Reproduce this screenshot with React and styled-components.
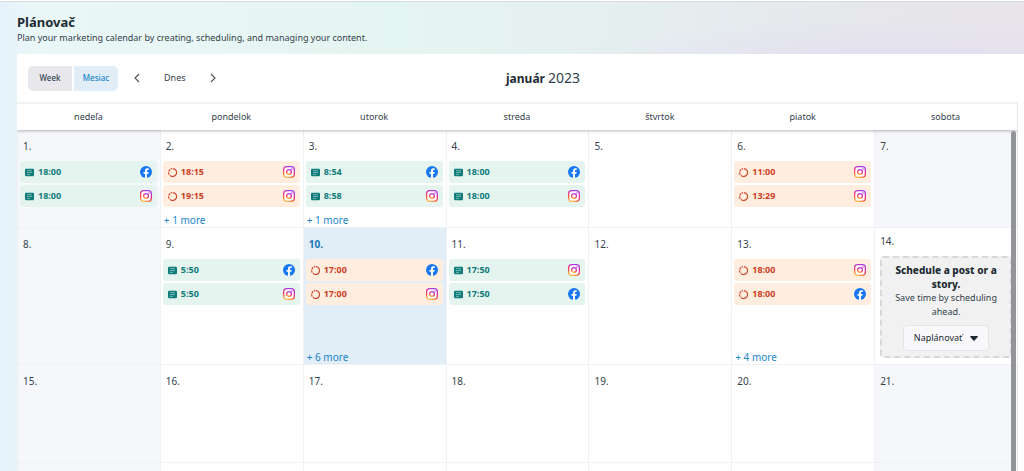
import React from "react";
import styled, { createGlobalStyle } from "styled-components";

const GlobalStyle = createGlobalStyle`
  * {
    box-sizing: border-box;
  }
  body {
    margin: 0;
    font-family: "Noto Sans", "Open Sans", sans-serif;
    font-size: 9px;
    line-height: 14px;
    color: #34424c;
  }
  h1, h2, h3, p, ul {
    margin: 0;
    padding: 0;
  }
  button {
    font: inherit;
    color: inherit;
    border: 0;
    background: none;
    padding: 0;
    cursor: pointer;
  }
`;

const StyledPage = styled.div`
  height: 100vh;
  overflow: hidden;
  display: flex;
  flex-direction: column;
  padding-left: 17px;
  border-top: 1px solid #fff;
  background:
    linear-gradient(90deg, #e6f1fc 0, rgba(230, 241, 252, 0) 30px),
    radial-gradient(ellipse 330px 40px at 900px 60px, #e3dff0, rgba(227, 223, 240, 0)),
    linear-gradient(90deg, #eaf7f8 0, #e5f5f1 400px, #e5edef 680px, #e6e8ec 820px, #e8e4ea 1024px);
  box-shadow: inset 0 1px 0 #d6dcdc;
`;

const StyledHeader = styled.header`
  padding: 12px 0 9px;
`;

const StyledTitle = styled.h1`
  font-size: 13px;
  line-height: 18px;
  font-weight: 700;
  color: #1c2b33;
`;

const StyledCard = styled.main`
  flex: 1;
  min-height: 0;
  display: flex;
  flex-direction: column;
  background: #fff;
  border-top-left-radius: 3px;
`;

const StyledToolbar = styled.div`
  display: grid;
  grid-template-columns: 14fr auto 13fr;
  align-items: center;
  height: 48px;
  flex: none;
  padding-left: 11px;
`;

const StyledTools = styled.div`
  display: flex;
  align-items: center;
  gap: 14px;
`;

const StyledSwitch = styled.div`
  display: flex;
  gap: 2px;
  border-radius: 5px;
  overflow: hidden;
`;

const StyledSwitchButton = styled.button`
  width: 44px;
  height: 25px;
  font-size: 8px;
  font-weight: 500;
  background: ${({ $active }) => ($active ? "#e1edf7" : "#e8e8ec")};
  color: ${({ $active }) => ($active ? "#1c86c8" : "#34424c")};
`;

const StyledToolButton = styled.button`
  display: flex;
  align-items: center;
  justify-content: center;
  min-width: 10px;
  margin: ${({ $wide }) => ($wide ? "0 8px" : "0")};
`;

const StyledMonth = styled.h2`
  font-size: 12px;
  line-height: 18px;
  font-weight: 700;
  color: #1c2b33;
  span {
    font-size: 14px;
    font-weight: 400;
    color: #34424c;
  }
`;

const StyledCalendar = styled.section`
  position: relative;
  flex: 1;
  min-height: 0;
  overflow: hidden;
  margin-right: 7px;
  box-shadow: 1px 0 0 #e6e8ee;
`;

const StyledWeekdays = styled.div`
  position: relative;
  display: grid;
  grid-template-columns: repeat(7, 1fr);
  align-items: center;
  height: 28px;
  border-top: 2px solid #f2f3f5;
  text-align: center;
  background: #fff;
  box-shadow: 0 1px 3px rgba(0, 0, 0, 0.28);
`;

const StyledWeeks = styled.div`
  display: grid;
  grid-template-columns: repeat(7, 1fr);
  grid-auto-rows: minmax(98px, auto);
`;

const cellColors = {
  plain: "#fff",
  weekend: "#f6f7fa",
  today: "#e1edf7",
};

const StyledDay = styled.div`
  display: flex;
  flex-direction: column;
  min-width: 0;
  padding: ${({ $promo }) => ($promo ? "6px 5px" : "9px 3px 0 2px")};
  border-left: 1px solid #eff1f4;
  border-bottom: 1px solid #eff1f4;
  background: ${({ $kind }) => cellColors[$kind]};
`;

const StyledDate = styled.div`
  font-size: 10px;
  padding-left: ${({ $promo }) => ($promo ? "0" : "3px")};
  margin-bottom: 8px;
  font-weight: ${({ $today }) => ($today ? 700 : 400)};
  color: ${({ $today }) => ($today ? "#1878b4" : "inherit")};
`;

const StyledPosts = styled.ul`
  list-style: none;
  display: flex;
  flex-direction: column;
  gap: 2px;
`;

const StyledPost = styled.li`
  display: flex;
  align-items: center;
  gap: 4px;
  height: 22px;
  padding: 0 5px;
  border-radius: 3px;
  font-weight: 700;
  color: ${({ $draft }) => ($draft ? "#cf4023" : "#0f7c7c")};
  background: ${({ $draft }) => ($draft ? "#ffede0" : "#e6f4ef")};
  svg:last-child {
    margin-left: auto;
  }
`;

const StyledMore = styled.a`
  margin-top: auto;
  padding-left: 1px;
  font-size: 10px;
  color: #1c86c8;
  text-decoration: none;
`;

const StyledPromo = styled.div`
  display: flex;
  flex-direction: column;
  align-items: center;
  padding: 5px 6px;
  border: 2px dashed #d6d8da;
  border-radius: 3px;
  background: #f1f1f1;
  text-align: center;
  h3 {
    font-size: 10px;
    line-height: 14px;
    font-weight: 800;
    color: #1c2b33;
  }
`;

const StyledPromoButton = styled.button`
  display: flex;
  align-items: center;
  gap: 8px;
  height: 26px;
  margin-top: 6px;
  padding: 0 10px;
  border: 1px solid #e4e6ea;
  border-radius: 4px;
  background: #f8f8fa;
  color: #1c2b33;
`;

const StyledScrollThumb = styled.div`
  position: absolute;
  top: 29px;
  right: 1px;
  bottom: -8px;
  width: 5px;
  border-radius: 3px;
  background: #929497;
`;

function FacebookIcon() {
  return (
    <svg width="12" height="12" viewBox="0 0 24 24">
      <circle cx="12" cy="12" r="12" fill="#1877f2" />
      <path
        fill="#fff"
        d="M10.1 23.9v-8.4H7v-3.5h3.1V9.4c0-3.1 1.8-4.8 4.6-4.8 1.4 0 2.7.2 2.7.2v3h-1.5c-1.5 0-2 .9-2 1.9V12h3.4l-.6 3.5h-2.8v8.4z"
      />
    </svg>
  );
}

function InstagramIcon() {
  return (
    <svg width="12" height="12" viewBox="0 0 24 24" fill="none">
      <defs>
        <linearGradient id="instagram" x1="0.2" y1="1" x2="0.6" y2="0">
          <stop offset="0" stopColor="#fdc04a" />
          <stop offset="0.3" stopColor="#fb5a3c" />
          <stop offset="0.6" stopColor="#e6308c" />
          <stop offset="1" stopColor="#a83be8" />
        </linearGradient>
      </defs>
      <rect x="1.3" y="1.3" width="21.4" height="21.4" rx="6" fill="#fff" stroke="url(#instagram)" strokeWidth="2.6" />
      <circle cx="12" cy="12" r="4.8" stroke="url(#instagram)" strokeWidth="2.6" />
      <circle cx="18" cy="6" r="1.5" fill="#c336c8" />
    </svg>
  );
}

function PostIcon() {
  return (
    <svg width="9" height="9" viewBox="0 0 18 18">
      <rect x="0" y="1.5" width="18" height="15" rx="2.5" fill="#0f7c7c" />
      <path d="M4 5.2h10M4 9h10M4 12.8h6" stroke="#b5dad6" strokeWidth="1.2" />
    </svg>
  );
}

function DraftIcon() {
  return (
    <svg width="9" height="9" viewBox="0 0 18 18" fill="none" stroke="#cf4023" strokeWidth="2.2">
      <path d="M10 1.3a7.8 7.8 0 1 1-6.2 13.3" />
      <path d="M2.6 13.4a7.8 7.8 0 0 1-1.3-4.8M1.6 7a7.8 7.8 0 0 1 2.6-3.9M5.4 2.2a7.8 7.8 0 0 1 2.8-.9" />
    </svg>
  );
}

function Chevron({ flip }) {
  return (
    <svg width="6" height="10" viewBox="0 0 6 10" fill="none" stroke="#4a5258" strokeWidth="1.1">
      <path d={flip ? "M1 1l4 4-4 4" : "M5 1L1 5l4 4"} />
    </svg>
  );
}

const icons = { fb: FacebookIcon, ig: InstagramIcon };

const weekdays = ["nedeľa", "pondelok", "utorok", "streda", "štvrtok", "piatok", "sobota"];

const days = [
  { posts: [["18:00", "fb"], ["18:00", "ig"]] },
  { draft: true, posts: [["18:15", "ig"], ["19:15", "ig"]], more: 1 },
  { posts: [["8:54", "fb"], ["8:58", "ig"]], more: 1 },
  { posts: [["18:00", "fb"], ["18:00", "ig"]] },
  {},
  { draft: true, posts: [["11:00", "ig"], ["13:29", "ig"]] },
  {},
  {},
  { posts: [["5:50", "fb"], ["5:50", "ig"]] },
  { draft: true, posts: [["17:00", "fb"], ["17:00", "ig"]], more: 6, today: true },
  { posts: [["17:50", "ig"], ["17:50", "fb"]] },
  {},
  { draft: true, posts: [["18:00", "ig"], ["18:00", "fb"]], more: 4 },
  { promo: true },
  ...Array.from({ length: 14 }, () => ({})),
];

function getKind(index, day) {
  if (day.today) return "today";
  if (day.promo) return "plain";
  return index % 7 === 0 || index % 7 === 6 ? "weekend" : "plain";
}

function Promo() {
  return (
    <StyledPromo>
      <h3>Schedule a post or a story.</h3>
      <p>Save time by scheduling ahead.</p>
      <StyledPromoButton>
        Naplánovať
        <svg width="8" height="5" viewBox="0 0 8 5">
          <path d="M.6 0h6.8q.8.3.3.9L4.6 4.5q-.6.6-1.2 0L.3.9Q-.2.3.6 0z" fill="#1c2b33" />
        </svg>
      </StyledPromoButton>
    </StyledPromo>
  );
}

function Day({ number, kind, day }) {
  const { posts = [], more, draft, today, promo } = day;

  return (
    <StyledDay $kind={kind} $promo={promo}>
      <StyledDate $today={today} $promo={promo}>{number}.</StyledDate>
      {promo && <Promo />}
      {posts.length > 0 && (
        <StyledPosts>
          {posts.map(([time, network], i) => {
            const NetworkIcon = icons[network];
            return (
              <StyledPost key={i} $draft={draft}>
                {draft ? <DraftIcon /> : <PostIcon />}
                <span>{time}</span>
                <NetworkIcon />
              </StyledPost>
            );
          })}
        </StyledPosts>
      )}
      {more && <StyledMore href="#">+ {more} more</StyledMore>}
    </StyledDay>
  );
}

function App() {
  return (
    <StyledPage>
      <GlobalStyle />
      <StyledHeader>
        <StyledTitle>Plánovač</StyledTitle>
        <p>Plan your marketing calendar by creating, scheduling, and managing your content.</p>
      </StyledHeader>
      <StyledCard>
        <StyledToolbar>
          <StyledTools>
            <StyledSwitch>
              <StyledSwitchButton>Week</StyledSwitchButton>
              <StyledSwitchButton $active>Mesiac</StyledSwitchButton>
            </StyledSwitch>
            <StyledToolButton aria-label="Previous"><Chevron /></StyledToolButton>
            <StyledToolButton $wide>Dnes</StyledToolButton>
            <StyledToolButton aria-label="Next"><Chevron flip /></StyledToolButton>
          </StyledTools>
          <StyledMonth>január <span>2023</span></StyledMonth>
        </StyledToolbar>
        <StyledCalendar>
          <StyledWeekdays>
            {weekdays.map((name) => <span key={name}>{name}</span>)}
          </StyledWeekdays>
          <StyledWeeks>
            {days.map((day, i) => (
              <Day key={i} number={i + 1} kind={getKind(i, day)} day={day} />
            ))}
          </StyledWeeks>
          <StyledScrollThumb />
        </StyledCalendar>
      </StyledCard>
    </StyledPage>
  );
}

export default App;
